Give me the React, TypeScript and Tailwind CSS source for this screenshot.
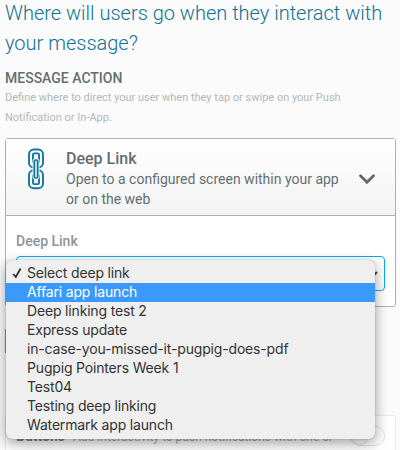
const options = [
  'Select deep link',
  'Affari app launch',
  'Deep linking test 2',
  'Express update',
  'in-case-you-missed-it-pugpig-does-pdf',
  'Pugpig Pointers Week 1',
  'Test04',
  'Testing deep linking',
  'Watermark app launch',
];

function ChainIcon() {
  return (
    <svg width="18" height="42" viewBox="0 0 18 42" fill="none" stroke="#11789b" strokeWidth="1.9">
      <rect x="2" y="1.5" width="14" height="18" rx="4.8" />
      <rect x="6" y="5.4" width="6" height="9.5" rx="1.2" />
      <rect x="2" y="22.2" width="14" height="18" rx="4.8" />
      <rect x="6" y="26.6" width="6" height="9.5" rx="1.2" />
      <rect x="7" y="12" width="4" height="18" rx="1.2" stroke="#fafafa" strokeWidth="3" />
      <rect x="7.2" y="12" width="3.6" height="18" rx="1.2" fill="#b5dfe8" strokeWidth="1.6" />
    </svg>
  );
}

function OptionMenu() {
  return (
    <ul className="absolute left-[6px] top-[260px] h-[179px] w-[369px] rounded-[6px] bg-[#efefef] py-1 font-['Inter',sans-serif] text-[14px] tracking-[-0.17px] text-[#333] shadow-[0_0_1px_rgba(0,0,0,0.45),0_4px_14px_rgba(0,0,0,0.4)]">
      {options.map((label, i) => (
        <li
          key={label}
          className={`flex h-[19px] items-center whitespace-nowrap pb-[2px] ${
            i === 1 ? 'bg-[#3b99fc] text-white' : ''
          }`}
        >
          <span className="flex w-[21px] shrink-0 justify-center">
            {i === 0 && (
              <svg width="10" height="12" viewBox="0 0 10 12" fill="none" stroke="#333" strokeWidth="1.8">
                <path d="M1.2 7 3.8 10 8.6 1.5" />
              </svg>
            )}
          </span>
          <span>{label}</span>
        </li>
      ))}
    </ul>
  );
}

export default function App() {
  return (
    <div className="relative h-[450px] w-[400px] overflow-hidden bg-[#fbfbfb] pl-[5px] font-['Roboto',sans-serif] text-[#636e70]">
      <h1 className="-mt-[2px] whitespace-nowrap text-[20px] font-light leading-[30px] text-[#0f7396]">
        Where will users go when they interact with
        <br />
        your message?
      </h1>
      <h2 className="mt-[10px] text-[14px] font-medium leading-5">MESSAGE ACTION</h2>
      <p className="whitespace-nowrap text-[11px] leading-5 text-[#b2b8b8]">
        Define where to direct your user when they tap or swipe on your Push
        <br />
        Notification or In-App.
      </p>

      <section className="mt-[10px] h-[169px] w-[391px] rounded-[3px] border border-[#a9b1b2] bg-white">
        <header className="flex h-[77px] border-b border-[#a9b1b2] bg-gradient-to-b from-white to-[#f3f3f3]">
          <div className="w-[60px] shrink-0 pl-[21px] pt-[9px]">
            <ChainIcon />
          </div>
          <div className="w-[293px] pt-[10px]">
            <h3 className="text-[16px] font-medium leading-5">Deep Link</h3>
            <p className="whitespace-nowrap text-[14px] leading-5">
              Open to a configured screen within your app
              <br />
              or on the web
            </p>
          </div>
          <svg className="mt-[35px]" width="16" height="11" viewBox="0 0 16 11" fill="none" stroke="#5f6b6e" strokeWidth="2.8" strokeLinecap="round">
            <path d="M1.5 1.8 8 8.2 14.5 1.8" />
          </svg>
        </header>
        <div className="px-[10px] pt-[15px]">
          <label className="block text-[14px] font-medium leading-5 text-[#8b9496]">Deep Link</label>
          <div className="mt-[5px] flex h-[35px] w-[369px] items-center justify-end rounded-[4px] border border-[#08aeea] bg-white pr-[6px]">
            <svg width="8" height="6" viewBox="0 0 8 6" fill="none" stroke="#444" strokeWidth="2">
              <path d="M1 1 4 4 7 1" />
            </svg>
          </div>
        </div>
      </section>

      <div className="mt-[22px] h-[24px] w-[3px] border-l border-[#8d9798]" />

      <section className="mt-[62px] flex h-[60px] w-[391px] items-start rounded-[3px] border border-[#e8e8e8] bg-white pl-[10px] pt-[10px]">
        <p className="flex-1 whitespace-nowrap text-[12px] leading-5 text-[#a3a9aa]">
          <strong className="mr-2 text-[14px] font-bold text-[#7d8586]">Buttons</strong>
          Add interactivity to push notifications with one or
        </p>
        <span className="mr-[10px] h-5 w-[35px] rounded-full border border-[#e3e3e3]">
          <span className="block h-[18px] w-[18px] rounded-full border border-[#e3e3e3]" />
        </span>
      </section>

      <OptionMenu />
    </div>
  );
}
